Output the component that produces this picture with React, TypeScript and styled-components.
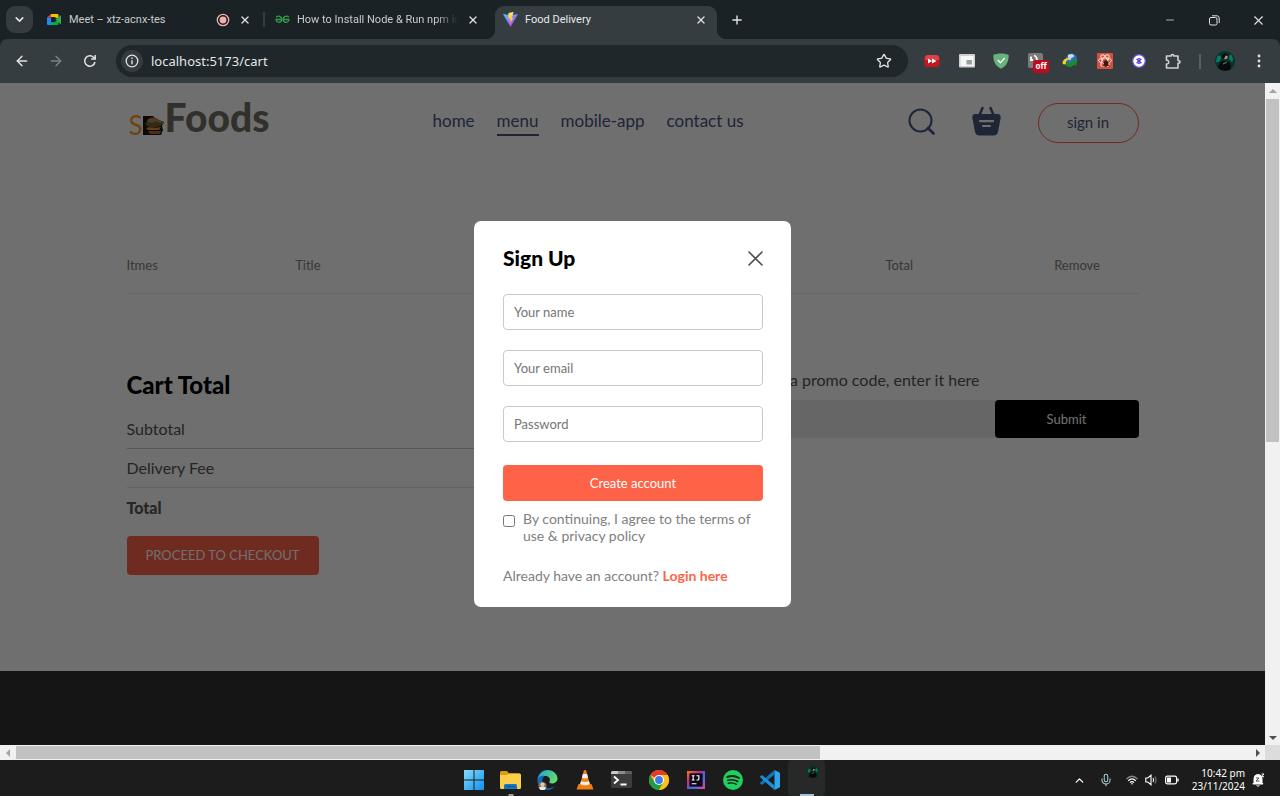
import React from 'react';
import styled, { createGlobalStyle } from 'styled-components';
import { ArrowLeft, ArrowRight, ChevronDown, ChevronUp, Mic, Minus, Plus, Star, X } from 'lucide-react';

const brand = 'Lato, "Liberation Sans", sans-serif';
const system = '"Noto Sans", "Liberation Sans", sans-serif';

const GlobalStyle = createGlobalStyle`
  * { box-sizing: border-box; }
  body { margin: 0; background: #1c1c1c; font-family: ${brand}; }
  h2, p { margin: 0; }
  button { border: 0; padding: 0; background: none; color: inherit; font: inherit; }
  a { color: inherit; text-decoration: none; }
  svg { display: block; flex-shrink: 0; }
`;

const Desktop = styled.div`
  display: flex;
  flex-direction: column;
  height: 100vh;
  min-height: 700px;
`;

/* ---------- browser chrome ---------- */

const TabStrip = styled.header`
  display: flex;
  align-items: flex-end;
  height: 39px;
  padding-left: 6px;
  background: #1b2225;
  color: #dfe3e4;
  font-family: Roboto, ${system};
`;

const TabSearch = styled.button`
  display: grid;
  place-items: center;
  width: 27px;
  height: 27px;
  margin: 0 6px 6px 0;
  border-radius: 9px;
  background: #353c3f;
`;

const Tabs = styled.nav`
  display: flex;
  gap: 6px;
`;

const Tab = styled.div<{ $active?: boolean; $divided?: boolean }>`
  position: relative;
  display: flex;
  align-items: center;
  gap: 7px;
  width: 222px;
  height: 33px;
  padding: 0 8px 6px;
  border-radius: 9px 9px 0 0;
  background: ${p => (p.$active ? '#363d40' : 'transparent')};
  color: ${p => (p.$active ? '#e6eaeb' : '#c6cbcd')};

  ${p => p.$divided && `
    &::after {
      content: '';
      position: absolute;
      top: 6px;
      right: -4px;
      width: 2px;
      height: 15px;
      background: #353c3f;
    }
  `}
  ${p => p.$active && `
    &::before, &::after {
      content: '';
      position: absolute;
      bottom: 0;
      width: 9px;
      height: 9px;
    }
    &::before { left: -9px; background: radial-gradient(circle at 0 0, transparent 9px, #363d40 9px); }
    &::after { right: -9px; background: radial-gradient(circle at 100% 0, transparent 9px, #363d40 9px); }
  `}
`;

const TabTitle = styled.a<{ $fade?: boolean }>`
  flex: 1;
  min-width: 0;
  overflow: hidden;
  white-space: nowrap;
  font-size: 11px;
  line-height: 16px;
  ${p => p.$fade && 'mask-image: linear-gradient(to right, #000 86%, transparent);'}
`;

const IconButton = styled.button<{ $width?: number; $dim?: boolean }>`
  display: grid;
  place-items: center;
  width: ${p => p.$width ?? 16}px;
  height: ${p => Math.min(p.$width ?? 16, 34)}px;
  flex-shrink: 0;
  color: ${p => (p.$dim ? '#7b8285' : '#dfe3e4')};
`;

const NewTab = styled(IconButton)`
  height: 27px;
  margin: 0 0 6px 6px;
`;

const WindowControls = styled.div`
  display: flex;
  margin-left: auto;
  padding-bottom: 2px;
`;

const ToolbarSurface = styled.div`
  background: #1b2225;
`;

const Toolbar = styled.div`
  display: flex;
  align-items: center;
  height: 44px;
  padding: 0 4px 0 5px;
  border-radius: 7px 7px 0 0;
  background: #363d40;
  color: #dfe3e4;
`;

const AddressBar = styled.form`
  display: flex;
  flex: 1;
  align-items: center;
  gap: 8px;
  height: 32px;
  margin: 0 7px 0 9px;
  padding: 0 8px 0 5px;
  border-radius: 16px;
  background: #1f272a;
`;

const SiteInfo = styled(IconButton)`
  border-radius: 50%;
  background: #353c3f;
`;

const AddressInput = styled.input`
  flex: 1;
  min-width: 0;
  padding: 0;
  border: 0;
  outline: 0;
  background: none;
  color: #e3e6e7;
  font: 13px/18px ${system};
`;

const Extensions = styled.div`
  display: flex;
  width: 276px;

  > button { flex: 1; }
`;

const ToolbarDivider = styled.span`
  width: 2px;
  height: 15px;
  margin: 0 7px 0 8px;
  background: #596063;
`;

const PageRow = styled.div`
  display: flex;
  flex: 1;
  min-height: 0;
`;

/* ---------- scroll bars ---------- */

const ScrollBar = styled.div<{ $vertical?: boolean }>`
  display: flex;
  flex-direction: ${p => (p.$vertical ? 'column' : 'row')};
  ${p => (p.$vertical ? 'width: 15px;' : 'flex: 1;')}
  background: #f1f1f1;
`;

const ScrollArrow = styled.button<{ $disabled?: boolean }>`
  display: grid;
  place-items: center;
  width: 15px;
  height: 15px;
  color: ${p => (p.$disabled ? '#a3a3a3' : '#505050')};
`;

const ScrollTrack = styled.div<{ $vertical?: boolean }>`
  display: flex;
  flex: 1;
  flex-direction: ${p => (p.$vertical ? 'column' : 'row')};
  padding: 1px;
`;

const ScrollThumb = styled.div<{ $share: number }>`
  flex: 0 0 ${p => p.$share}%;
  background: #c1c1c1;
`;

const BottomScroll = styled.div`
  display: flex;
  height: 15px;
`;

const ScrollCorner = styled.div`
  width: 15px;
  background: #dcdcdc;
`;

/* ---------- shop page ---------- */

const Viewport = styled.main`
  position: relative;
  display: flex;
  flex: 1;
  flex-direction: column;
  min-width: 0;
  overflow: hidden;
  background: #fff;
`;

const Content = styled.div`
  width: 80%;
  margin: 0 auto;
  padding-bottom: 96px;
`;

const Navbar = styled.header`
  display: flex;
  align-items: center;
  justify-content: space-between;
  padding: 20px 0;
`;

const Logo = styled.a`
  display: flex;
  align-items: flex-end;
  width: 142px;
  height: 40px;
  padding: 0 0 8px 2px;
  white-space: nowrap;
`;

const LogoInitial = styled.span`
  width: 16px;
  color: #ff9a1a;
  font-size: 26px;
  line-height: 20px;
`;

const LogoWord = styled.span`
  color: #736e63;
  font-size: 39px;
  font-weight: 900;
  line-height: 36px;
`;

const Menu = styled.nav`
  display: flex;
  gap: 22px;
  padding-bottom: 2px;
  color: #49557e;
  font-size: 17px;
  line-height: 24px;
`;

const MenuLink = styled.a<{ $active?: boolean }>`
  padding-bottom: 1px;
  border-bottom: 2px solid ${p => (p.$active ? '#49557e' : 'transparent')};
`;

const NavActions = styled.div`
  display: flex;
  align-items: center;
  gap: 37px;
`;

const NavIcon = styled.a`
  padding-bottom: 4px;
`;

const SignIn = styled.button`
  width: 101px;
  height: 40px;
  padding-bottom: 2px;
  border: 1px solid tomato;
  border-radius: 20px;
  color: #49557e;
  font-size: 15px;
`;

const ItemsTable = styled.table`
  width: 100%;
  margin-top: 89px;
  border-collapse: collapse;
  table-layout: fixed;
  color: grey;

  th {
    height: 41px;
    padding: 0 0 20px;
    border-bottom: 1px solid #eaeaea;
    font-size: 13px;
    font-weight: 400;
    line-height: 16px;
    text-align: left;
    vertical-align: bottom;
  }
`;

const CartBottom = styled.div`
  display: flex;
  gap: 12vw;
  margin-top: 76px;

  > * { flex: 1; min-width: 0; }
`;

const CartHeading = styled.h2`
  color: #000;
  font-size: 24px;
  font-weight: 900;
  line-height: 30px;
`;

const Totals = styled.dl`
  margin: 10px 0 0;
`;

const TotalRow = styled.dt<{ $strong?: boolean; $line?: string }>`
  height: ${p => (p.$line ? 39 : 40)}px;
  border-bottom: ${p => (p.$line ? `1px solid ${p.$line}` : '0')};
  color: #555;
  font-size: 16px;
  font-weight: ${p => (p.$strong ? 900 : 400)};
  line-height: ${p => (p.$line ? 38 : 40)}px;
`;

const Checkout = styled.button`
  width: 192px;
  height: 39px;
  margin-top: 8px;
  border-radius: 4px;
  background: tomato;
  color: #fff;
  font-size: 13px;
`;

const PromoLabel = styled.label`
  display: block;
  color: #555;
  font-size: 16px;
  line-height: 20px;
  white-space: nowrap;
`;

const PromoForm = styled.form`
  display: flex;
  height: 38px;
  margin-top: 10px;
  border-radius: 4px;
  background: #eaeaea;
`;

const PromoInput = styled.input`
  flex: 1;
  min-width: 0;
  padding: 0 10px;
  border: 0;
  outline: 0;
  background: none;
`;

const PromoSubmit = styled.button`
  width: 144px;
  border-radius: 4px;
  background: #000;
  color: #fff;
  font-size: 13px;
`;

const Footer = styled.footer`
  flex: 1;
  background: #323232;
`;

/* ---------- sign up dialog ---------- */

const Overlay = styled.div`
  position: absolute;
  inset: 0;
  display: grid;
  place-items: center;
  background: #00000090;
`;

const Dialog = styled.form`
  width: 317px;
  padding: 24px 28px 23px 29px;
  border-radius: 7px;
  background: #fff;
  color: grey;
  font-size: 14px;
  line-height: 17px;
`;

const DialogHead = styled.div`
  display: flex;
  align-items: center;
  justify-content: space-between;
  color: #000;

  h2 { font-size: 21px; font-weight: 900; line-height: 26px; }
`;

const Fields = styled.div`
  display: grid;
  gap: 20px;
  margin: 23px 0;
`;

const Field = styled.input`
  width: 100%;
  height: 36px;
  padding: 0 10px;
  border: 1px solid #c9c9c9;
  border-radius: 4px;
  outline: 0;
  font: 13px/16px ${brand};

  &::placeholder { color: #757575; }
`;

const CreateAccount = styled.button`
  width: 100%;
  height: 36px;
  border-radius: 4px;
  background: tomato;
  color: #fff;
  font-size: 13px;
`;

const Terms = styled.label`
  display: flex;
  align-items: flex-start;
  gap: 8px;
  margin: 9px 0 23px;

  input { flex-shrink: 0; width: 12px; height: 12px; margin: 5px 0 0; }
`;

const LoginLink = styled.a`
  color: tomato;
  font-weight: 700;
`;

/* ---------- task bar ---------- */

const TaskBar = styled.footer`
  display: grid;
  grid-template-columns: 1fr auto 1fr;
  height: 36px;
  background: #1c1c1c;
  color: #fff;
  font-family: ${system};
`;

const TaskApps = styled.div`
  display: flex;
  grid-column: 2;
`;

const TaskApp = styled.button<{ $mark?: string; $active?: boolean }>`
  position: relative;
  display: grid;
  place-items: center;
  width: 37px;
  height: 36px;
  padding-top: 4px;
  border-radius: 4px;
  background: ${p => (p.$active ? '#272928' : 'none')};

  ${p => p.$mark && `
    &::after {
      content: '';
      position: absolute;
      bottom: 0;
      left: 50%;
      width: ${p.$active ? 14 : 5}px;
      height: 2px;
      transform: translateX(-50%);
      background: ${p.$mark};
    }
  `}
`;

const Tray = styled.div`
  display: flex;
  align-items: center;
  justify-content: flex-end;
  gap: 7px;
  padding: 4px 15px 0 0;
`;

const TrayButton = styled.button`
  margin-right: 6px;
`;

const Clock = styled.time`
  margin-left: 6px;
  font-size: 10px;
  line-height: 13px;
  text-align: right;
`;

/* ---------- drawings ---------- */

const MeetIcon = () => (
  <svg width="15" height="15" viewBox="0 0 15 15">
    <path d="M4 2h6.500a1 1 0 0 1 1 1v3H8.500V5H4z" fill="#fbbc04" />
    <path d="M0 5.500 4 2v3.500z" fill="#ea4335" />
    <path d="M0 5.500h4V13H1a1 1 0 0 1-1-1z" fill="#2684fc" />
    <path d="M4 10h4.500V9l3-1v4a1 1 0 0 1-1 1H4z" fill="#00ac47" />
    <path d="M8.500 7.500 14 3v9.500l-3-2.500z" fill="#34a853" />
  </svg>
);

const GeeksIcon = () => (
  <svg width="15" height="15" viewBox="0 0 15 15" fill="none" stroke="#2f9e4c" strokeWidth="1.300">
    <path d="M7.500 7.500H.5M1.200 5.200C3 3.300 6.800 4.300 6.800 7.500S2.300 11.500 1 8" />
    <path d="M7.500 7.500h7M13.800 5.200C12 3.300 8.200 4.300 8.200 7.500s4.500 4 5.800.5" />
  </svg>
);

const ViteIcon = () => (
  <svg width="15" height="15" viewBox="0 0 15 15">
    <defs>
      <linearGradient id="vite" x1="0" y1="0" x2=".7" y2="1">
        <stop stopColor="#41d1ff" />
        <stop offset="1" stopColor="#bd34fe" />
      </linearGradient>
      <linearGradient id="bolt" x1="0" y1="0" x2="0" y2="1">
        <stop stopColor="#ffea83" />
        <stop offset="1" stopColor="#ffa800" />
      </linearGradient>
    </defs>
    <path d="M0 2l7.500 13L15 2 7.500 3.300z" fill="url(#vite)" />
    <path d="M10.600 0 5.500 1 5.200 6.500l1.600-.3L6.400 8.700l1.300-.4L7 12l3.500-6.300-1.600.3z" fill="url(#bolt)" />
  </svg>
);

const RecordIcon = () => (
  <svg width="14" height="14" viewBox="0 0 14 14">
    <circle cx="7" cy="7" r="5.700" fill="none" stroke="#f2b0ab" strokeWidth="1.300" />
    <circle cx="7" cy="7" r="3.400" fill="#f2b0ab" />
  </svg>
);

const ReloadIcon = () => (
  <svg width="14" height="14" viewBox="0 0 14 14" fill="none" stroke="currentColor" strokeWidth="1.500">
    <path d="M12 8a5.200 5.200 0 1 1-1.300-4.600L12 4.700" />
    <path d="M12.200 1v4H8.200" />
  </svg>
);

const InfoIcon = () => (
  <svg width="14" height="14" viewBox="0 0 14 14">
    <circle cx="7" cy="7" r="5.800" fill="none" stroke="currentColor" strokeWidth="1.300" />
    <path d="M7 6.200v4M7 3.600v1.500" stroke="currentColor" strokeWidth="1.400" />
  </svg>
);

const RestoreIcon = () => (
  <svg width="11" height="11" viewBox="0 0 11 11" fill="none" stroke="currentColor">
    <rect x=".5" y="2.500" width="7.500" height="7.500" rx="1.500" />
    <path d="M3 .8h5A2.300 2.300 0 0 1 10.200 3v5" />
  </svg>
);

const PlayerIcon = () => (
  <svg width="16" height="14" viewBox="0 0 16 14">
    <rect x=".5" y="1" width="15" height="12" rx="3" fill="#c4161c" />
    <path d="M1 6V4a3 3 0 0 1 3-3h8a3 3 0 0 1 3 3v2z" fill="#df4046" />
    <path d="M4 4.500 8 7 4 9.500zM8 4.500 12.500 7 8 9.500z" fill="#fff" />
  </svg>
);

const PipIcon = () => (
  <svg width="16" height="14" viewBox="0 0 16 14">
    <rect width="16" height="13.500" rx="1" fill="#d0d0d0" />
    <rect x="1.500" y="2" width="13" height="10" fill="#f7f7f7" />
    <rect x="7.500" y="6" width="5.500" height="4.500" fill="#9a9ea1" />
  </svg>
);

const ShieldIcon = () => (
  <svg width="16" height="16" viewBox="0 0 16 16">
    <path d="M8 .5c3 0 5.500.500 7.700 1.500C15.700 8 14 13 8 15.700 2 13 .3 8 .3 2 2.500 1 5 .5 8 .5z" fill="#68b27b" />
    <path d="m4.800 7 2.700 2.800L11.600 5" fill="none" stroke="#fff" strokeWidth="1.300" />
  </svg>
);

const OffIcon = () => (
  <svg width="26" height="26" viewBox="0 0 26 26">
    <rect x="5" y="5" width="15" height="15" rx="2" fill="#7b7b7b" />
    <path d="M8 8.500v3.500h2M11 7.500c2 .5 3 2 3 5" stroke="#fff" strokeWidth="1.800" fill="none" />
    <rect x="10" y="12" width="16" height="13" rx="3" fill="#c20a1f" />
    <text x="18" y="21" textAnchor="middle" fill="#fff" fontFamily="Noto Sans" fontSize="8" fontWeight="700">off</text>
  </svg>
);

const GlobeIcon = () => (
  <svg width="16" height="16" viewBox="0 0 16 16">
    <circle cx="9.500" cy="6" r="5.500" fill="#2f6fb4" />
    <path d="M6 2c3-2 6-1 6 1s-3 1-3 3-2 1-3 0z" fill="#b9dff2" />
    <path d="M.5 9.500C1 6 5 4 9.500 5.500 6 6 3.500 8 4 11c-2 1-3.500.5-3.500-1.500z" fill="#f2cf31" />
    <path d="M5 9.500c2 1 4 .5 5.500-1L9.500 7.500 15.500 7l-1.500 6-1.500-1.500C10 15 5 14.500 3 11.500z" fill="#1f8a28" />
  </svg>
);

const ReactBugIcon = () => (
  <svg width="16" height="16" viewBox="0 0 16 16">
    <rect width="16" height="16" rx="1" fill="#d94f3d" />
    <g fill="none" stroke="#fbe3df">
      <ellipse cx="8" cy="7.500" rx="6.500" ry="2.500" />
      <ellipse cx="8" cy="7.500" rx="6.500" ry="2.500" transform="rotate(60 8 7.500)" />
      <ellipse cx="8" cy="7.500" rx="6.500" ry="2.500" transform="rotate(120 8 7.500)" />
    </g>
    <ellipse cx="9" cy="10.500" rx="2.200" ry="3.200" fill="#3d1714" />
    <path d="M5.500 8.500 12.500 13M12.500 8.500 5.500 13" stroke="#3d1714" />
  </svg>
);

const FocusIcon = () => (
  <svg width="14" height="14" viewBox="0 0 14 14">
    <circle cx="7" cy="7" r="6.300" fill="#fff" stroke="#6b4fe0" strokeWidth="1.200" />
    <path d="m4.700 4.700 4.600 4.600M9.300 4.700 4.700 9.300" stroke="#5636d6" strokeWidth="1.600" />
    <path d="M6 4.700h2M6 9.300h2" stroke="#5636d6" />
  </svg>
);

const PuzzleIcon = () => (
  <svg width="17" height="17" viewBox="0 0 17 17" fill="none" stroke="#cdd2d4" strokeWidth="1.600" strokeLinejoin="round">
    <path d="M1.500 3h4.800c-.4-2 2.800-2 2.400 0h4.300v4.600c2.600-.4 2.600 3 0 2.600V15H1.500v-4c3 .3 3-4 0-3.800z" />
  </svg>
);

const Portrait = ({ size }: { size: number }) => (
  <svg width={size} height={size} viewBox="0 0 20 20">
    <circle cx="10" cy="10" r="10" fill="#06332c" />
    <path d="M2 6c2-2 4-2 4 1s-3 5-5 4zM15 3c3 2 4 6 2 8l-3-3z" fill="#0c7a61" />
    <path d="M3 17c1-5 3-7 6-7 5 0 7 2 7 8-4 2.500-9 2.500-13-1z" fill="#080a0b" />
    <circle cx="10.500" cy="6" r="2.200" fill="#b98a6f" />
    <path d="M7 7C6 2 12 1 13.500 5L10.500 4.500 9 8z" fill="#0a0b0c" />
    <path d="m8 13 4-2" stroke="#9c8474" />
  </svg>
);

const DotsIcon = () => (
  <svg width="4" height="14" viewBox="0 0 4 14" fill="currentColor">
    <circle cx="2" cy="2" r="1.400" />
    <circle cx="2" cy="7" r="1.400" />
    <circle cx="2" cy="12" r="1.400" />
  </svg>
);

const Arrow = ({ turn }: { turn: number }) => (
  <svg width="8" height="8" viewBox="0 0 8 8">
    <path d="M0 6 4 2l4 4z" fill="currentColor" transform={`rotate(${turn} 4 4)`} />
  </svg>
);

const BurgerIcon = () => (
  <svg width="22" height="19" viewBox="0 0 22 19">
    <path d="M0 0h10l3 3 8 3-2 4 1 4-2 5H0z" fill="#22160f" />
    <path d="M4 5c1-4 9-5 12-1l4 2v2H5z" fill="#b98556" />
    <path d="M2 7c3-2 6 1 9-1s5 2 9 1l-2 3H4z" fill="#56702f" />
    <path d="M5 9h13l-3 2H6z" fill="#a0452c" />
    <path d="M3 12c4-2 9 1 15-1l-2 3H5z" fill="#d99a3c" />
    <path d="M5 15h13l-1 3H7z" fill="#a96b42" />
  </svg>
);

const SearchIcon = () => (
  <svg width="27" height="27" viewBox="0 0 27 27" fill="none" stroke="#49557e" strokeWidth="2">
    <circle cx="12.500" cy="12.500" r="11" />
    <path d="m20 20 5.500 5.500" strokeWidth="2.800" strokeLinecap="round" />
  </svg>
);

const BasketIcon = () => (
  <svg width="29" height="30" viewBox="0 0 29 30">
    <path d="M2.500 8H26.500Q29 8.500 28.600 12L26 26Q25 29.500 21.500 29.500H7.500Q4 29.500 3 26L.4 12Q0 8.500 2.500 8z" fill="#49557e" />
    <path d="M7.500 9 10.500 2M21.500 9 18.500 2" stroke="#49557e" strokeWidth="2.500" strokeLinecap="round" />
    <path d="M8 15.200h13M11 20h7" stroke="#fff" strokeWidth="2.200" strokeLinecap="round" />
  </svg>
);

const CrossIcon = () => (
  <svg width="15" height="15" viewBox="0 0 15 15" stroke="#4a4a4a" strokeWidth="1.600" strokeLinecap="round">
    <path d="m1 1 13 13M14 1 1 14" />
  </svg>
);

const WindowsIcon = () => (
  <svg width="20" height="20" viewBox="0 0 20 20">
    <defs>
      <linearGradient id="win" x1="0" y1="0" x2="1" y2="1">
        <stop stopColor="#85dcfb" />
        <stop offset="1" stopColor="#0f8ff0" />
      </linearGradient>
    </defs>
    <path d="M0 0h9.500v9.500H0zM10.500 0H20v9.500h-9.500zM0 10.500h9.500V20H0zM10.500 10.500H20V20h-9.500z" fill="url(#win)" />
  </svg>
);

const FolderIcon = () => (
  <svg width="21" height="20" viewBox="0 0 21 20">
    <path d="M0 2.500Q0 1 1.500 1H7l2 2.500h10q1.500 0 1.500 1.500v3H0z" fill="#dc9c16" />
    <path d="M0 5h7l2-1.500h10.500Q21 3.500 21 5v12.500q0 1.500-1.500 1.500h-18Q0 19 0 17.500z" fill="#fbcf4a" />
    <path d="M4 19v-3.500Q4 14 5.500 14h10q1.500 0 1.500 1.500V19z" fill="#1575c5" />
    <path d="M6.500 16h8v1h-8z" fill="#0b4f8f" />
  </svg>
);

const EdgeIcon = () => (
  <svg width="21" height="20" viewBox="0 0 21 20">
    <defs>
      <linearGradient id="edge" x1="0" y1="0" x2="1" y2=".5">
        <stop stopColor="#1d9ee0" />
        <stop offset="1" stopColor="#5fdc6b" />
      </linearGradient>
    </defs>
    <path d="M.5 10C1 4 5.500 0 10.500 0c6 0 10 4.200 10 8.500 0 3.500-3 5-5.500 5s-3-1-2.500-2c1.500-3-1-5.500-4-5.500C4.500 6 1.500 8 .5 10z" fill="url(#edge)" />
    <path d="M.5 10c1-3.500 4-5 7-4C4 9 5 15 9 17.500c3 1.500 6.500.5 9-1.500-1.500 2.500-4.500 4-7.500 4C4 20 0 15 .5 10z" fill="#1467b5" />
    <circle cx="5.500" cy="16" r="4" fill="#8a7564" />
    <circle cx="5.500" cy="14.500" r="2" fill="#e5c9ac" />
    <path d="M2 18c1-2 6-2 7 0l-1.500 2h-4z" fill="#ece6df" />
  </svg>
);

const VlcIcon = () => (
  <svg width="18" height="20" viewBox="0 0 18 20">
    <path d="M2.500 14h13l2 5.500H.5z" fill="#f07c0f" />
    <path d="M9 0q1 0 1.300 1L14 15q-5 3-10 0L7.700 1Q8 0 9 0z" fill="#f58314" />
    <path d="M6.900 4h4.200l1 3.700q-3.100 1.500-6.200 0zM5 11q4 2 8 0l.8 3q-4.800 2.500-9.600 0z" fill="#f1f1f1" />
  </svg>
);

const TerminalIcon = () => (
  <svg width="21" height="18" viewBox="0 0 21 18">
    <rect width="21" height="17" rx="1.500" fill="#3c3c3c" />
    <path d="M0 1.500Q0 0 1.500 0H7v3H0z" fill="#c8c8c8" />
    <path d="M7 0h7v3H7z" fill="#8d8d8d" />
    <path d="M14 0h5.500Q21 0 21 1.500V3h-7z" fill="#616161" />
    <path d="m3 5.500 4 3.500-4 3.500M9.500 13.500h6" fill="none" stroke="#fff" strokeWidth="1.800" />
  </svg>
);

const ChromeIcon = () => (
  <svg width="20" height="20" viewBox="0 0 20 20">
    <circle cx="10" cy="10" r="10" fill="#fbc116" />
    <path d="M10 10 1.340 5A10 10 0 0 1 18.660 5H10z" fill="#e33b2e" />
    <path d="M1.340 5A10 10 0 0 0 10 20l4.330-7.500L5.670 12.500z" fill="#229a4b" />
    <path d="M10 5h8.660A10 10 0 0 1 10 20l4.330-7.500z" fill="#fbc116" />
    <circle cx="10" cy="10" r="5" fill="#fff" />
    <circle cx="10" cy="10" r="3.900" fill="#3c7de6" />
  </svg>
);

const IdeaIcon = () => (
  <svg width="18" height="18" viewBox="0 0 19 19">
    <defs>
      <linearGradient id="idea" x1="0" y1="0" x2="1" y2="1">
        <stop stopColor="#f97a12" />
        <stop offset=".35" stopColor="#c52b84" />
        <stop offset=".6" stopColor="#3d6df0" />
        <stop offset="1" stopColor="#f2409a" />
      </linearGradient>
    </defs>
    <rect width="19" height="19" fill="url(#idea)" />
    <rect x="2.500" y="2.500" width="14" height="14" fill="#0b0a16" />
    <path d="M5 5h3M6.500 5v4.500M5 9.500h3M10 5h2.500v3.500q0 1-1 1H10M5 13.500h5" fill="none" stroke="#fff" strokeWidth="1.200" />
  </svg>
);

const SpotifyIcon = () => (
  <svg width="20" height="20" viewBox="0 0 20 20">
    <circle cx="10" cy="10" r="10" fill="#1ed05e" />
    <g fill="none" stroke="#181c1a" strokeLinecap="round">
      <path d="M4.300 7C8 5.700 12.500 6 16 8" strokeWidth="2" />
      <path d="M4.800 10.300c3.500-1 7-.6 10 1.100" strokeWidth="1.700" />
      <path d="M5.300 13.300c3-.8 5.800-.4 8.200 1" strokeWidth="1.400" />
    </g>
  </svg>
);

const CodeIcon = () => (
  <svg width="20" height="20" viewBox="0 0 20 20">
    <path d="M14.500 0v20L19 17.800q1-.5 1-1.500V3.700q0-1-1-1.500z" fill="#2da6ec" />
    <path d="M14.500 4.500 2 15 .4 13.700q-.6-.6 0-1.200L14.500 0z" fill="#0f78bd" />
    <path d="M14.500 15.500 2 5 .4 6.300q-.6.6 0 1.200L14.500 20z" fill="#1d8fd8" />
  </svg>
);

const ActiveAppIcon = () => (
  <svg width="37" height="30" viewBox="0 0 37 30">
    <g transform="translate(19 1)">
      <Portrait size={12} />
    </g>
  </svg>
);

const WifiIcon = () => (
  <svg width="12" height="10" viewBox="0 0 12 10" fill="none" stroke="#fff" strokeWidth="1.200">
    <path d="M.5 4Q6-1.500 11.500 4" stroke="#8c8c8c" />
    <path d="M2.200 5.800Q6 2 9.800 5.800M4 7.600Q6 5.500 8 7.600" />
    <circle cx="6" cy="8.800" r=".8" fill="#fff" stroke="none" />
  </svg>
);

const SpeakerIcon = () => (
  <svg width="13" height="12" viewBox="0 0 13 12" fill="none" stroke="#fff" strokeWidth="1.100">
    <path d="M.8 4h2L6 1.300v9.400L2.800 8h-2z" />
    <path d="M8 4q1.300 2 0 4" />
    <path d="M9.800 2.500q2.500 3.500 0 7" stroke="#777" />
  </svg>
);

const BatteryIcon = () => (
  <svg width="14" height="10" viewBox="0 0 14 10">
    <rect x=".6" y="1.100" width="11" height="7.800" rx="1.800" fill="none" stroke="#fff" strokeWidth="1.200" />
    <rect x="2" y="2.500" width="4" height="5" fill="#fff" />
    <path d="M13 3.500v3" stroke="#fff" strokeWidth="1.400" />
  </svg>
);

const BellIcon = () => (
  <svg width="13" height="14" viewBox="0 0 13 14">
    <path d="M2 9.500V5.500Q2 1.500 6 1.500q4 0 4 4v4l1 1.500H.8z" fill="#fff" stroke="#fff" strokeLinejoin="round" />
    <path d="M4.500 12.500q1.500 1.500 3 0" stroke="#fff" fill="none" />
    <path d="M4 5h3L4 8h3.500" stroke="#555" fill="none" />
    <path d="M9.500 1H12L9.500 3.700H12" stroke="#fff" fill="none" />
  </svg>
);

/* ---------- data ---------- */

const extensions = [
  { name: 'Video speed', icon: <PlayerIcon /> },
  { name: 'Picture in picture', icon: <PipIcon /> },
  { name: 'Ad blocker', icon: <ShieldIcon /> },
  { name: 'Switch', icon: <OffIcon /> },
  { name: 'Download manager', icon: <GlobeIcon /> },
  { name: 'React tools', icon: <ReactBugIcon /> },
  { name: 'Focus', icon: <FocusIcon /> },
  { name: 'Extensions', icon: <PuzzleIcon /> },
];

const apps = [
  { name: 'Start', icon: <WindowsIcon /> },
  { name: 'Files', icon: <FolderIcon />, mark: '#9a9a9a' },
  { name: 'Edge', icon: <EdgeIcon /> },
  { name: 'VLC', icon: <VlcIcon /> },
  { name: 'Terminal', icon: <TerminalIcon /> },
  { name: 'Chrome', icon: <ChromeIcon /> },
  { name: 'IntelliJ', icon: <IdeaIcon /> },
  { name: 'Spotify', icon: <SpotifyIcon /> },
  { name: 'Code', icon: <CodeIcon /> },
];

/* the two middle columns lie behind the dialog and carry only a spoken name */
const columns = [
  { name: 'Items', text: 'Itmes' },
  { name: 'Title', text: 'Title', parts: 3 },
  { name: 'Price' },
  { name: 'Quantity' },
  { name: 'Total', text: 'Total' },
  { name: 'Remove', text: 'Remove', parts: 1 },
];

const fields = [
  { name: 'name', type: 'text', hint: 'Your name' },
  { name: 'email', type: 'email', hint: 'Your email' },
  { name: 'password', type: 'password', hint: 'Password' },
];

const CloseTab = () => (
  <IconButton aria-label="Close tab"><X size={12} strokeWidth={2.600} /></IconButton>
);

export default function App() {
  return (
    <Desktop>
      <GlobalStyle />
      <TabStrip>
        <TabSearch aria-label="Search tabs"><ChevronDown size={13} strokeWidth={3} /></TabSearch>
        <Tabs>
          <Tab $divided>
            <MeetIcon />
            <TabTitle href="#meet">Meet – xtz-acnx-tes</TabTitle>
            <RecordIcon />
            <CloseTab />
          </Tab>
          <Tab>
            <GeeksIcon />
            <TabTitle href="#guide" $fade>How to Install Node &amp; Run npm in</TabTitle>
            <CloseTab />
          </Tab>
          <Tab $active>
            <ViteIcon />
            <TabTitle href="#cart">Food Delivery</TabTitle>
            <CloseTab />
          </Tab>
        </Tabs>
        <NewTab $width={28} aria-label="New tab"><Plus size={14} strokeWidth={2.400} /></NewTab>
        <WindowControls>
          <IconButton $width={44} aria-label="Minimise"><Minus size={12} strokeWidth={1.500} /></IconButton>
          <IconButton $width={44} aria-label="Restore"><RestoreIcon /></IconButton>
          <IconButton $width={44} aria-label="Close"><X size={15} strokeWidth={1.700} /></IconButton>
        </WindowControls>
      </TabStrip>
      <ToolbarSurface>
        <Toolbar>
          <IconButton $width={34} aria-label="Back"><ArrowLeft size={16} strokeWidth={2.200} /></IconButton>
          <IconButton $width={34} $dim aria-label="Forward"><ArrowRight size={16} strokeWidth={2.200} /></IconButton>
          <IconButton $width={34} aria-label="Reload"><ReloadIcon /></IconButton>
          <AddressBar onSubmit={e => e.preventDefault()}>
            <SiteInfo $width={22} type="button" aria-label="Site information"><InfoIcon /></SiteInfo>
            <AddressInput aria-label="Address" defaultValue="localhost:5173/cart" />
            <IconButton $width={32} type="button" aria-label="Bookmark"><Star size={16} strokeWidth={2} /></IconButton>
          </AddressBar>
          <Extensions>
            {extensions.map(e => (
              <IconButton key={e.name} $width={34} aria-label={e.name}>{e.icon}</IconButton>
            ))}
          </Extensions>
          <ToolbarDivider />
          <IconButton $width={34} aria-label="Profile"><Portrait size={20} /></IconButton>
          <IconButton $width={34} aria-label="Browser menu"><DotsIcon /></IconButton>
        </Toolbar>
      </ToolbarSurface>

      <PageRow>
        <Viewport>
          <Content>
            <Navbar>
              <Logo href="#home">
                <LogoInitial>S</LogoInitial>
                <BurgerIcon />
                <LogoWord>Foods</LogoWord>
              </Logo>
              <Menu>
                <MenuLink href="#home">home</MenuLink>
                <MenuLink href="#menu" $active>menu</MenuLink>
                <MenuLink href="#app">mobile-app</MenuLink>
                <MenuLink href="#contact">contact us</MenuLink>
              </Menu>
              <NavActions>
                <NavIcon href="#search" aria-label="Search"><SearchIcon /></NavIcon>
                <NavIcon href="#cart" aria-label="Cart"><BasketIcon /></NavIcon>
                <SignIn>sign in</SignIn>
              </NavActions>
            </Navbar>

            <ItemsTable>
              <colgroup>
                {columns.map(c => <col key={c.name} style={{ width: `${((c.parts ?? 2) / 12) * 100}%` }} />)}
              </colgroup>
              <thead>
                <tr>
                  {columns.map(c => <th key={c.name} scope="col" aria-label={c.name}>{c.text}</th>)}
                </tr>
              </thead>
            </ItemsTable>

            <CartBottom>
              <section>
                <CartHeading>Cart Total</CartHeading>
                <Totals>
                  <TotalRow $line="#cacaca">Subtotal</TotalRow>
                  <TotalRow $line="#e2e2e2">Delivery Fee</TotalRow>
                  <TotalRow $strong>Total</TotalRow>
                </Totals>
                <Checkout>PROCEED TO CHECKOUT</Checkout>
              </section>
              <section>
                <PromoLabel htmlFor="promo">If you have a promo code, enter it here</PromoLabel>
                <PromoForm onSubmit={e => e.preventDefault()}>
                  <PromoInput id="promo" />
                  <PromoSubmit>Submit</PromoSubmit>
                </PromoForm>
              </section>
            </CartBottom>
          </Content>
          <Footer />

          <Overlay>
            <Dialog role="dialog" aria-label="Sign Up" onSubmit={e => e.preventDefault()}>
              <DialogHead>
                <h2>Sign Up</h2>
                <button type="button" aria-label="Close"><CrossIcon /></button>
              </DialogHead>
              <Fields>
                {fields.map(f => (
                  <Field key={f.name} name={f.name} type={f.type} placeholder={f.hint} aria-label={f.hint} />
                ))}
              </Fields>
              <CreateAccount>Create account</CreateAccount>
              <Terms>
                <input type="checkbox" />
                <span>By continuing, I agree to the terms of use &amp; privacy policy</span>
              </Terms>
              <p>Already have an account? <LoginLink href="#login">Login here</LoginLink></p>
            </Dialog>
          </Overlay>
        </Viewport>
        <ScrollBar $vertical>
          <ScrollArrow $disabled aria-label="Scroll up"><Arrow turn={0} /></ScrollArrow>
          <ScrollTrack $vertical><ScrollThumb $share={54.4} /></ScrollTrack>
          <ScrollArrow aria-label="Scroll down"><Arrow turn={180} /></ScrollArrow>
        </ScrollBar>
      </PageRow>
      <BottomScroll>
        <ScrollBar>
          <ScrollArrow $disabled aria-label="Scroll left"><Arrow turn={270} /></ScrollArrow>
          <ScrollTrack><ScrollThumb $share={65.2} /></ScrollTrack>
          <ScrollArrow aria-label="Scroll right"><Arrow turn={90} /></ScrollArrow>
        </ScrollBar>
        <ScrollCorner />
      </BottomScroll>

      <TaskBar>
        <TaskApps>
          {apps.map(a => (
            <TaskApp key={a.name} aria-label={a.name} $mark={a.mark}>{a.icon}</TaskApp>
          ))}
          <TaskApp aria-label="Chrome profile" $active $mark="#9fc3d6"><ActiveAppIcon /></TaskApp>
        </TaskApps>
        <Tray>
          <TrayButton aria-label="Hidden icons"><ChevronUp size={13} strokeWidth={2.400} /></TrayButton>
          <TrayButton aria-label="Microphone"><Mic size={14} strokeWidth={1.800} color="#a9cbd8" /></TrayButton>
          <WifiIcon />
          <SpeakerIcon />
          <BatteryIcon />
          <Clock dateTime="2024-11-23T22:42">10:42 pm<br />23/11/2024</Clock>
          <BellIcon />
        </Tray>
      </TaskBar>
    </Desktop>
  );
}
